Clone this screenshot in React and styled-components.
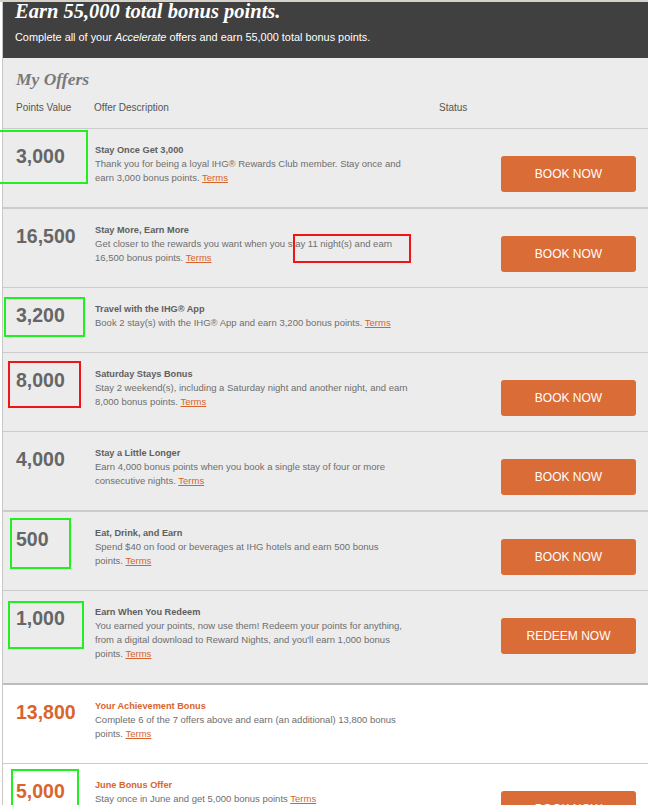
import React from "react";
import styled, { createGlobalStyle } from "styled-components";

const Global = createGlobalStyle`
  html, body { margin: 0; padding: 0; background: #ffffff; }
  body { font-family: "Liberation Sans", Arial, sans-serif; }
`;

const Page = styled.div`
  position: relative;
  width: 648px;
  height: 805px;
  overflow: hidden;
  border-top: 2px solid #d6d2ca;
  box-sizing: border-box;
  padding-left: 2px;
  background: #ffffff;
`;

const Frame = styled.div`
  border-left: 1px solid #c8c8c8;
`;

const Header = styled.header`
  background: #404040;
  padding: 0 12px 14px 12px;
`;

const HeaderTitle = styled.h1`
  margin: 0;
  font-family: "Liberation Serif", "Times New Roman", serif;
  font-style: italic;
  font-weight: bold;
  font-size: 20.5px;
  line-height: 17px;
  padding-top: 1px;
  color: #ffffff;
`;

const HeaderText = styled.p`
  margin: 10px 0 0 0;
  font-size: 10.9px;
  line-height: 14px;
  color: #ffffff;
`;

const OffersHead = styled.div`
  background: #ececec;
  padding: 11px 12px 13px 13px;
  border-bottom: 1px solid #cbcbcb;
`;

const SectionTitle = styled.h2`
  margin: 0;
  font-family: "Liberation Serif", "Times New Roman", serif;
  font-style: italic;
  font-weight: bold;
  font-size: 17.5px;
  line-height: 20px;
  color: #7a7a7a;
`;

const ColumnRow = styled.div`
  display: grid;
  grid-template-columns: 78px 345px 1fr;
  margin-top: 12px;
  font-size: 10px;
  line-height: 14px;
  color: #555555;
`;

const Row = styled.div`
  display: grid;
  grid-template-columns: 79px 344px 1fr;
  align-items: start;
  padding: 14px 12px 15px 13px;
  background: ${(p) => (p.$white ? "#ffffff" : "#ececec")};
  border-bottom: ${(p) => (p.$thick ? "2px" : "1px")} solid
    ${(p) => (p.$dark ? "#bdbdbd" : "#cbcbcb")};
`;

const Points = styled.div`
  font-weight: bold;
  font-size: 19.5px;
  line-height: 26px;
  color: ${(p) => (p.$accent ? "#d9652d" : "#666666")};
`;

const Desc = styled.div`
  padding-bottom: 7px;
`;

const OfferTitle = styled.div`
  font-weight: bold;
  font-size: 9.2px;
  line-height: 14px;
  color: ${(p) => (p.$accent ? "#d9652d" : "#606060")};
  white-space: nowrap;
`;

const DescLine = styled.div`
  font-size: 9.5px;
  line-height: 14px;
  color: #6e6e6e;
  white-space: nowrap;
`;

const Terms = styled.a`
  color: #d8642a;
  text-decoration: underline;
  cursor: pointer;
`;

const ActionButton = styled.button`
  justify-self: end;
  margin-top: 13px;
  width: 135px;
  height: 36px;
  border: none;
  border-radius: 3px;
  background: #da6c37;
  color: #ffffff;
  font-family: "Liberation Sans", Arial, sans-serif;
  font-size: 12px;
  cursor: pointer;
`;

const Mark = styled.div`
  position: absolute;
  box-sizing: border-box;
  border: 2px solid ${(p) => (p.$red ? "#f01414" : "#22ee22")};
  pointer-events: none;
`;

const offers = [
  {
    pts: "3,000",
    title: "Stay Once Get 3,000",
    lines: [
      "Thank you for being a loyal IHG® Rewards Club member. Stay once and",
      "earn 3,000 bonus points.",
    ],
    action: "BOOK NOW",
    thick: true,
  },
  {
    pts: "16,500",
    title: "Stay More, Earn More",
    lines: [
      "Get closer to the rewards you want when you stay 11 night(s) and earn",
      "16,500 bonus points.",
    ],
    action: "BOOK NOW",
  },
  {
    pts: "3,200",
    title: "Travel with the IHG® App",
    lines: ["Book 2 stay(s) with the IHG® App and earn 3,200 bonus points."],
  },
  {
    pts: "8,000",
    title: "Saturday Stays Bonus",
    lines: [
      "Stay 2 weekend(s), including a Saturday night and another night, and earn",
      "8,000 bonus points.",
    ],
    action: "BOOK NOW",
  },
  {
    pts: "4,000",
    title: "Stay a Little Longer",
    lines: [
      "Earn 4,000 bonus points when you book a single stay of four or more",
      "consecutive nights.",
    ],
    action: "BOOK NOW",
    thick: true,
  },
  {
    pts: "500",
    title: "Eat, Drink, and Earn",
    lines: [
      "Spend $40 on food or beverages at IHG hotels and earn 500 bonus",
      "points.",
    ],
    action: "BOOK NOW",
  },
  {
    pts: "1,000",
    title: "Earn When You Redeem",
    lines: [
      "You earned your points, now use them! Redeem your points for anything,",
      "from a digital download to Reward Nights, and you'll earn 1,000 bonus",
      "points.",
    ],
    action: "REDEEM NOW",
    thick: true,
    dark: true,
  },
  {
    pts: "13,800",
    title: "Your Achievement Bonus",
    lines: [
      "Complete 6 of the 7 offers above and earn (an additional) 13,800 bonus",
      "points.",
    ],
    accent: true,
    white: true,
  },
  {
    pts: "5,000",
    title: "June Bonus Offer",
    lines: ["Stay once in June and get 5,000 bonus points"],
    action: "BOOK NOW",
    accent: true,
    white: true,
  },
];

const marks = [
  { l: -2, t: 128, w: 90, h: 54 },
  { l: 293, t: 232, w: 118, h: 29, red: true },
  { l: 4, t: 295, w: 81, h: 40 },
  { l: 8, t: 359, w: 73, h: 47, red: true },
  { l: 10, t: 516, w: 61, h: 51 },
  { l: 8, t: 599, w: 76, h: 48 },
  { l: 11, t: 767, w: 68, h: 60 },
];

export default function App() {
  return (
    <>
      <Global />
      <Page>
        <Frame>
          <Header>
            <HeaderTitle>Earn 55,000 total bonus points.</HeaderTitle>
            <HeaderText>
              Complete all of your <i>Accelerate</i> offers and earn 55,000
              total bonus points.
            </HeaderText>
          </Header>
          <OffersHead>
            <SectionTitle>My Offers</SectionTitle>
            <ColumnRow>
              <span>Points Value</span>
              <span>Offer Description</span>
              <span>Status</span>
            </ColumnRow>
          </OffersHead>
          {offers.map((o) => (
            <Row key={o.title} $white={o.white} $thick={o.thick} $dark={o.dark}>
              <Points $accent={o.accent}>{o.pts}</Points>
              <Desc>
                <OfferTitle $accent={o.accent}>{o.title}</OfferTitle>
                {o.lines.map((line, i) => (
                  <DescLine key={i}>
                    {line}
                    {i === o.lines.length - 1 && (
                      <>
                        {" "}
                        <Terms>Terms</Terms>
                      </>
                    )}
                  </DescLine>
                ))}
              </Desc>
              {o.action ? <ActionButton>{o.action}</ActionButton> : <span />}
            </Row>
          ))}
        </Frame>
        {marks.map((m, i) => (
          <Mark
            key={i}
            $red={m.red}
            style={{ left: m.l, top: m.t, width: m.w, height: m.h }}
          />
        ))}
      </Page>
    </>
  );
}
